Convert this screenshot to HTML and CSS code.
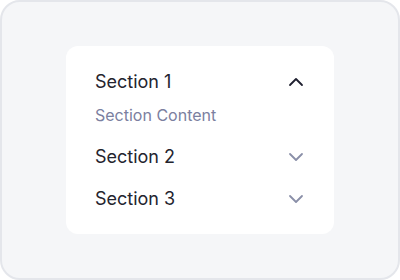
FILE: index.html
```html
<!DOCTYPE html>
<html lang="en">
<head>
<meta charset="utf-8">
<link rel="stylesheet" href="styles.css">
</head>
<body>
<div class="frame">
  <div class="card">
    <div class="item">
      <div class="header">
        <span class="title">Section 1</span>
        <svg class="chev open" viewBox="0 0 24 24" width="24" height="24"><path d="M6 15l6-6 6 6"/></svg>
      </div>
      <div class="content">Section Content</div>
    </div>
    <div class="item">
      <div class="header">
        <span class="title">Section 2</span>
        <svg class="chev" viewBox="0 0 24 24" width="24" height="24"><path d="M6 9l6 6 6-6"/></svg>
      </div>
    </div>
    <div class="item">
      <div class="header">
        <span class="title">Section 3</span>
        <svg class="chev" viewBox="0 0 24 24" width="24" height="24"><path d="M6 9l6 6 6-6"/></svg>
      </div>
    </div>
  </div>
</div>
</body>
</html>
```
FILE: styles.css
```css
html, body {
  margin: 0;
  padding: 0;
  background: #ffffff;
}
body {
  font-family: Inter, "Noto Sans", sans-serif;
}
.frame {
  box-sizing: border-box;
  width: 400px;
  height: 280px;
  border: 2px solid #e4e6eb;
  border-radius: 20px;
  background: #f5f6f8;
  display: flex;
  align-items: center;
  justify-content: center;
}
.card {
  box-sizing: border-box;
  width: 268px;
  height: 188px;
  background: #ffffff;
  border-radius: 12px;
  padding: 15px 26px 13px 29px;
  display: flex;
  flex-direction: column;
}
.header {
  height: 42px;
  display: flex;
  align-items: center;
  justify-content: space-between;
}
.title {
  font-size: 18px;
  color: #24242e;
  line-height: 42px;
}
.content {
  font-size: 16px;
  line-height: 24px;
  color: #7b80a0;
  padding-bottom: 9px;
}
.chev {
  display: block;
  fill: none;
  stroke: #8a8fa8;
  stroke-width: 1.8;
  stroke-linecap: round;
  stroke-linejoin: round;
}
.chev.open {
  stroke: #1f2030;
}
```
